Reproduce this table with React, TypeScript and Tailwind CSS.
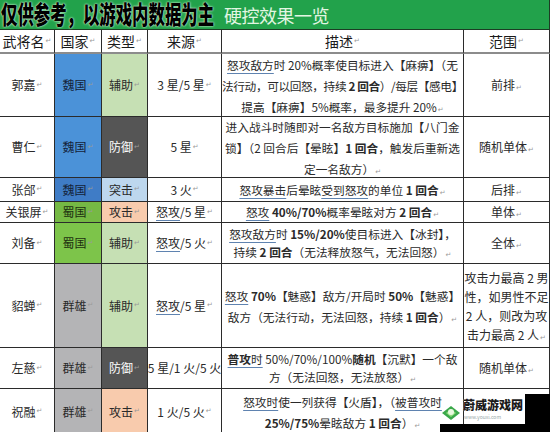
import React from "react";

const M = () => (
  <span className="font-['DejaVu_Sans'] text-[7px] leading-none text-[#9a9a9a] ml-[1px] align-baseline">↵</span>
);

const U = ({ children }: { children: React.ReactNode }) => (
  <span className="underline decoration-[#5f83b0] underline-offset-[3px] decoration-1">{children}</span>
);

const B = ({ children }: { children: React.ReactNode }) => <b className="font-bold">{children}</b>;

type Row = {
  name: string;
  h: string;
  country: string;
  cBg: string;
  cText: string;
  type: string;
  tBg: string;
  tText: string;
  source: React.ReactNode;
  desc: React.ReactNode;
  dLh: string;
  range: React.ReactNode;
  rLh?: string;
};

const rows: Row[] = [
  {
    name: "郭嘉",
    h: "h-[63px]",
    country: "魏国",
    cBg: "bg-[#4b92d8]",
    cText: "text-[#14233a]",
    type: "辅助",
    tBg: "bg-[#c6e0b4]",
    tText: "text-[#2a2a2a]",
    source: <>3 星/5 星<M /></>,
    desc: (
      <>
        <U>怒攻敌方</U>时 20%概率使目标进入【麻痹】（无
        <br />
        <span className="tracking-[-0.4px]">
          法行动，可以回怒，持续 <B>2 回合</B>）/每层【感电】
        </span>
        <br />
        提高【麻痹】5%概率，最多提升 20%<M />
      </>
    ),
    dLh: "leading-[21px]",
    range: <>前排<M /></>,
  },
  {
    name: "曹仁",
    h: "h-[61px]",
    country: "魏国",
    cBg: "bg-[#4b92d8]",
    cText: "text-[#14233a]",
    type: "防御",
    tBg: "bg-[#555555]",
    tText: "text-white",
    source: <>5 星<M /></>,
    desc: (
      <>
        进入战斗时随即对一名敌方目标施加【八门金
        <br />
        锁】（2 回合后【晕眩】<B>1 回合</B>，触发后重新选
        <br />
        定一名敌方）<M />
      </>
    ),
    dLh: "leading-[21px]",
    range: <>随机单体<M /></>,
  },
  {
    name: "张郃",
    h: "h-[24px]",
    country: "魏国",
    cBg: "bg-[#3f7cc6]",
    cText: "text-[#14233a]",
    type: "突击",
    tBg: "bg-[#bdd7ee]",
    tText: "text-[#2a2a2a]",
    source: <>3 火<M /></>,
    desc: (
      <>
        <U>怒攻暴击</U>后晕眩<U>受到怒攻</U>的单位 <B>1 回合</B>
        <M />
      </>
    ),
    dLh: "leading-[20px]",
    range: <>后排<M /></>,
  },
  {
    name: "关银屏",
    h: "h-[21px]",
    country: "蜀国",
    cBg: "bg-[#75b944]",
    cText: "text-[#1d3010]",
    type: "攻击",
    tBg: "bg-[#f8cbad]",
    tText: "text-[#2a2a2a]",
    source: <><U>怒攻</U>/5 星<M /></>,
    desc: (
      <>
        <U>怒攻</U> <B>40%/70%</B>概率晕眩对方 <B>2 回合</B>
        <M />
      </>
    ),
    dLh: "leading-[18px]",
    range: <>单体<M /></>,
  },
  {
    name: "刘备",
    h: "h-[41px]",
    country: "蜀国",
    cBg: "bg-[#7dc44a]",
    cText: "text-[#1d3010]",
    type: "辅助",
    tBg: "bg-[#c6e0b4]",
    tText: "text-[#2a2a2a]",
    source: <><U>怒攻</U>/5 火<M /></>,
    desc: (
      <>
        <U>怒攻敌方</U>时 <B>15%/20%</B>使目标进入【冰封】，
        <br />
        持续 <B>2 回合</B>（无法释放怒气，无法回怒）<M />
      </>
    ),
    dLh: "leading-[18px]",
    range: <>全体<M /></>,
  },
  {
    name: "貂蝉",
    h: "h-[84px]",
    country: "群雄",
    cBg: "bg-[#b4b4b6]",
    cText: "text-[#2a2a2a]",
    type: "辅助",
    tBg: "bg-[#c6e0b4]",
    tText: "text-[#2a2a2a]",
    source: <><U>怒攻</U>/5 星<M /></>,
    desc: (
      <>
        <U>怒攻</U> <B>70%</B>【魅惑】敌方/开局时 <B>50%</B>【魅惑】
        <br />
        敌方（无法行动，无法回怒，持续 <B>1 回合</B>）<M />
      </>
    ),
    dLh: "leading-[21px]",
    range: (
      <>
        攻击力最高 2 男
        <br />
        性，如男性不足
        <br />
        2 人，则改为攻
        <br />
        击力最高 2 人<M />
      </>
    ),
    rLh: "leading-[19px]",
  },
  {
    name: "左慈",
    h: "h-[41px]",
    country: "群雄",
    cBg: "bg-[#b4b4b6]",
    cText: "text-[#2a2a2a]",
    type: "防御",
    tBg: "bg-[#555555]",
    tText: "text-white",
    source: <>5 星/1 火/5 火</>,
    desc: (
      <>
        <U>
          <B>普攻</B>时
        </U>{" "}
        50%/70%/100%<B>随机</B>【沉默】一个敌
        <br />
        方（无法回怒，无法放怒）<M />
      </>
    ),
    dLh: "leading-[18px]",
    range: <>随机单体<M /></>,
  },
  {
    name: "祝融",
    h: "h-[46px]",
    country: "群雄",
    cBg: "bg-[#b4b4b6]",
    cText: "text-[#2a2a2a]",
    type: "攻击",
    tBg: "bg-[#f8cbad]",
    tText: "text-[#2a2a2a]",
    source: <>1 火/5 火<M /></>,
    desc: (
      <>
        <U>怒攻时</U>使一列获得【火盾】，（<U>被普攻时</U>
        <br />
        <B>25%/75%</B>晕眩敌方 <B>1 回合</B>）<M />
      </>
    ),
    dLh: "leading-[21px]",
    range: <></>,
  },
];

const cell =
  "flex items-center justify-center text-center border-r border-b border-[#2b2b2b] overflow-hidden";
const head =
  "flex items-center justify-center text-center border-r border-b-2 border-r-[#2b2b2b] border-b-[#8c8c8c] overflow-hidden leading-[18px]";

export default function App() {
  return (
    <div className="relative w-[550px] h-[432px] overflow-hidden bg-white font-['Noto_Sans_CJK_SC','Noto_Sans',sans-serif] text-[#2a2a2a]">
      {/* banner */}
      <div className="h-[30px] bg-[#22a24b] border-b border-r border-[#1c3d24] flex items-center">
        <div className="w-[224px] shrink-0 h-full flex items-center">
          <span className="inline-block whitespace-nowrap text-[16.4px] leading-[17px] font-black text-black origin-center [transform:scaleY(1.5)] [text-shadow:0_0_1px_#e8ffe8,0_0_2px_#bff0c8] pl-[1px]">
            仅供参考，以游戏内数据为主
          </span>
        </div>
        <span className="text-[18px] leading-[20px] text-[#e2f6e2] tracking-[-0.5px] whitespace-nowrap">
          硬控效果一览
        </span>
      </div>

      {/* header */}
      <div className="grid grid-cols-[55px_47px_46px_74px_242px_86px] h-[24px] text-[14px] text-[#1a1a1a]">
        <div className={head}>武将名<M /></div>
        <div className={head}>国家<M /></div>
        <div className={head}>类型<M /></div>
        <div className={head}>来源<M /></div>
        <div className={head}>描述<M /></div>
        <div className={head}>范围<M /></div>
      </div>

      {/* body */}
      {rows.map((r) => (
        <div
          key={r.name}
          className={"grid grid-cols-[55px_47px_46px_74px_242px_86px] text-[12px] " + r.h}
        >
          <div className={cell + " leading-[18px]"}>
            {r.name}
            <M />
          </div>
          <div className={cell + " leading-[18px] " + r.cBg + " " + r.cText}>
            {r.country}
            <M />
          </div>
          <div className={cell + " leading-[18px] " + r.tBg + " " + r.tText}>
            {r.type}
            <M />
          </div>
          <div className={cell + " leading-[18px] whitespace-nowrap"}>{r.source}</div>
          <div
            className={
              cell +
              " whitespace-nowrap text-[11.7px] " +
              r.dLh +
              (r.name === "祝融" ? " items-start pt-[2px]" : "")
            }
          >
            <div>{r.desc}</div>
          </div>
          <div className={cell + " whitespace-nowrap " + (r.rLh ?? "leading-[18px]")}>
            <div>{r.range}</div>
          </div>
        </div>
      ))}

      {/* watermark overlay */}
      <div className="absolute right-0 bottom-0 w-[110px] h-[38px]">
        <div className="absolute right-0 top-0 w-[25px] h-[38px] bg-black" />
        <div className="absolute left-0 right-0 bottom-0 h-[8px] bg-black" />
        <div className="absolute left-[0px] top-[10px] w-[22px] h-[18px]">
          <svg viewBox="0 0 22 18" width="22" height="18">
            <polygon points="2,9 11,2 20,9 11,16" fill="#3aa84a" />
            <polygon points="6,9 11,5 16,9 11,13" fill="#8fdc7a" />
            <circle cx="11" cy="8" r="3" fill="#e9f9e0" />
          </svg>
        </div>
        <div className="absolute left-[23px] top-[5px] text-[12px] leading-[12px] font-black text-[#1a1a1a] whitespace-nowrap [text-shadow:0_0_1px_#fff]">
          蔚威游戏网
        </div>
        <div className="absolute left-[24px] top-[20px] text-[5px] leading-[5px] text-[#9aa] whitespace-nowrap">
          www.youxi.com
        </div>
      </div>
    </div>
  );
}
